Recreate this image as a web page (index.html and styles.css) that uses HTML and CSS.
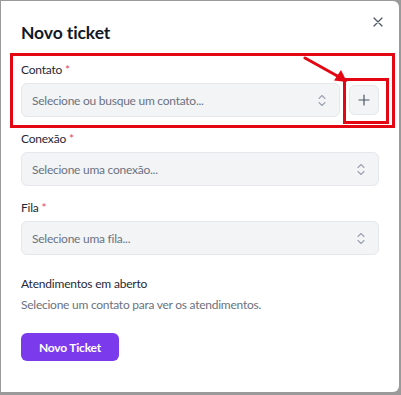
FILE: index.html
```html
<!DOCTYPE html>
<html lang="pt">
<head>
<meta charset="utf-8">
<link rel="stylesheet" href="styles.css">
</head>
<body>
<div class="dialog">
  <button class="close" aria-label="Fechar">
    <svg width="10" height="10" viewBox="0 0 10 10"><path d="M1 1L9 9M9 1L1 9" stroke="#4b5563" stroke-width="1.2" stroke-linecap="round"/></svg>
  </button>
  <h2 class="title">Novo ticket</h2>

  <div class="field first">
    <label class="label">Contato <span class="req">*</span></label>
    <div class="row">
      <div class="select">
        <span class="ph">Selecione ou busque um contato...</span>
        <svg class="chev" width="8" height="13" viewBox="0 0 8 13"><path d="M1 4.5L4 1.5L7 4.5M1 8.5L4 11.5L7 8.5" fill="none" stroke="#9ca3af" stroke-width="1.1" stroke-linecap="round" stroke-linejoin="round"/></svg>
      </div>
      <button class="add" aria-label="Adicionar">
        <svg width="12" height="12" viewBox="0 0 12 12"><path d="M6 1V11M1 6H11" stroke="#4b5563" stroke-width="1.2" stroke-linecap="round"/></svg>
      </button>
    </div>
  </div>

  <div class="field">
    <label class="label">Conexão <span class="req">*</span></label>
    <div class="select">
      <span class="ph">Selecione uma conexão...</span>
      <svg class="chev" width="8" height="13" viewBox="0 0 8 13"><path d="M1 4.5L4 1.5L7 4.5M1 8.5L4 11.5L7 8.5" fill="none" stroke="#9ca3af" stroke-width="1.1" stroke-linecap="round" stroke-linejoin="round"/></svg>
    </div>
  </div>

  <div class="field">
    <label class="label">Fila <span class="req">*</span></label>
    <div class="select">
      <span class="ph">Selecione uma fila...</span>
      <svg class="chev" width="8" height="13" viewBox="0 0 8 13"><path d="M1 4.5L4 1.5L7 4.5M1 8.5L4 11.5L7 8.5" fill="none" stroke="#9ca3af" stroke-width="1.1" stroke-linecap="round" stroke-linejoin="round"/></svg>
    </div>
  </div>

  <div class="open">
    <div class="open-title">Atendimentos em aberto</div>
    <div class="open-sub">Selecione um contato para ver os atendimentos.</div>
  </div>

  <button class="primary">Novo Ticket</button>

  <div class="mark mark-big"></div>
  <div class="mark mark-small"></div>
  <svg class="arrow" width="50" height="30" viewBox="0 0 50 30"><path d="M2 2L38 22" stroke="#e30613" stroke-width="3" stroke-linecap="round"/><path d="M44 26L31 24.5L38 14Z" fill="#e30613"/></svg>
</div>
</body>
</html>
```

FILE: styles.css
```css
* { box-sizing: border-box; }
html, body { margin: 0; padding: 0; }
body {
  width: 401px;
  height: 395px;
  background: #9a9a9a;
  font-family: Lato, "Noto Sans", sans-serif;
  overflow: hidden;
}
.dialog {
  position: relative;
  width: 398px;
  height: 391px;
  margin: 1px 2px 0 1px;
  background: #fff;
  border-radius: 0 6px 6px 0;
  padding: 20px 20px 0 20px;
  display: flex;
  flex-direction: column;
  align-items: stretch;
}
.close {
  position: absolute;
  top: 14px;
  right: 14px;
  width: 14px;
  height: 14px;
  padding: 0;
  border: 0;
  background: none;
  display: flex;
  align-items: center;
  justify-content: center;
}
.title {
  margin: 0;
  font-size: 17.5px;
  line-height: 24px;
  font-weight: 700;
  color: #111827;
  letter-spacing: -0.1px;
}
.field { display: flex; flex-direction: column; margin-top: 14px; }
.field.first { margin-top: 17px; }
.label {
  font-size: 12px;
  line-height: 16px;
  color: #1f2937;
  margin-bottom: 5px;
  letter-spacing: -0.2px;
}
.req { color: #e5485f; }
.row { display: flex; align-items: center; gap: 9px; }
.row .select { flex: 1; }
.select {
  height: 34px;
  background: #f3f4f6;
  border: 1px solid #e5e7eb;
  border-radius: 6px;
  display: flex;
  align-items: center;
  justify-content: space-between;
  padding: 0 13px 0 10px;
}
.ph { font-size: 12px; color: #6b7280; letter-spacing: -0.25px; }
.chev { display: block; }
.add {
  width: 30px;
  height: 30px;
  padding: 0;
  background: #f3f4f6;
  border: 1px solid #e5e7eb;
  border-radius: 6px;
  display: flex;
  align-items: center;
  justify-content: center;
}
.open { margin-top: 21px; }
.open-title { font-size: 12px; line-height: 16px; color: #1f2937; letter-spacing: -0.2px; }
.open-sub { font-size: 12px; line-height: 16px; color: #6b7280; margin-top: 5px; letter-spacing: -0.25px; }
.primary {
  align-self: flex-start;
  margin-top: 20px;
  width: 98px;
  height: 28px;
  background: #7c3aed;
  color: #fff;
  border: 0;
  border-radius: 6px;
  font-family: inherit;
  font-size: 12px;
  font-weight: 700;
  letter-spacing: -0.2px;
}
.mark {
  position: absolute;
  border: 3px solid #e30613;
}
.mark-big { left: 9px; top: 52px; width: 385px; height: 75px; }
.mark-small { left: 342px; top: 77px; width: 46px; height: 46px; }
.arrow { position: absolute; left: 302px; top: 55px; }
```
